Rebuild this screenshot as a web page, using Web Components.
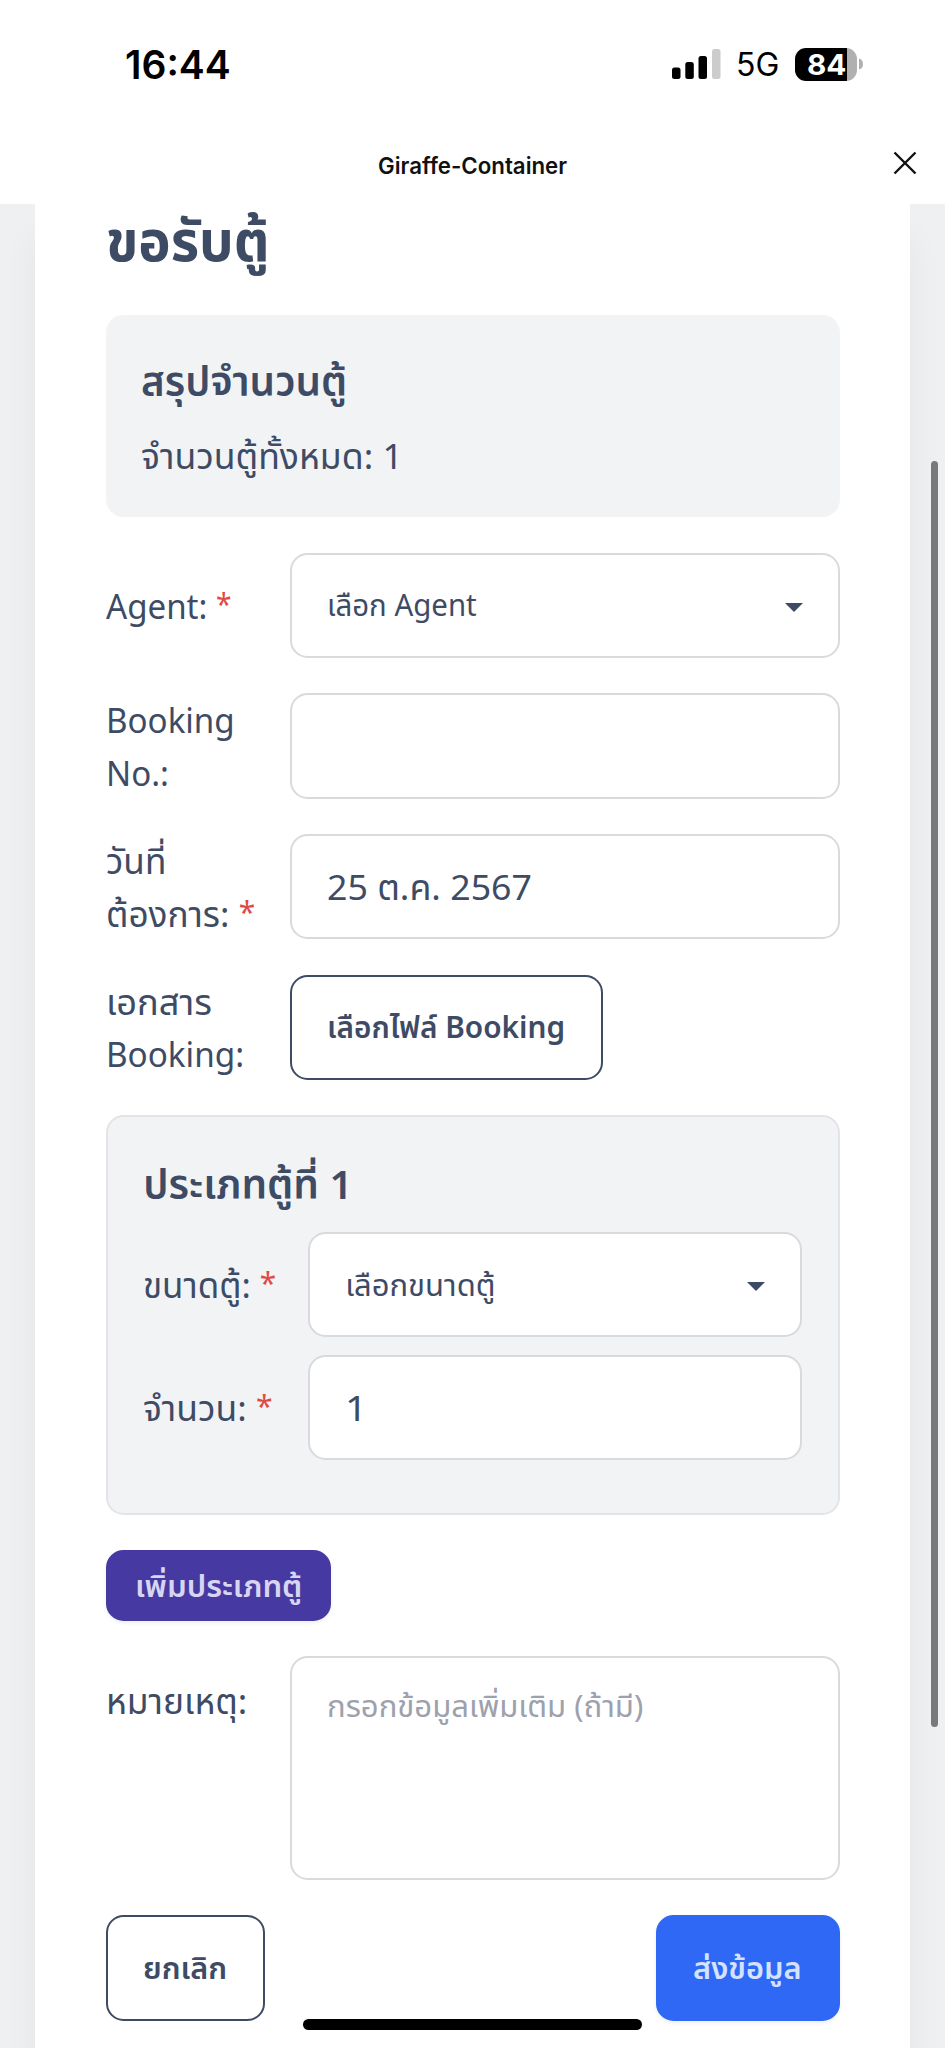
<!DOCTYPE html>
<html lang="th">
<head>
<meta charset="utf-8">
<title>Giraffe-Container</title>
<style>
html,body{margin:0;padding:0}
body{width:945px;height:2048px;overflow:hidden;background:#fff;font-family:"Noto Sans","Noto Sans Thai","IBM Plex Sans Thai",sans-serif;color:#3e4b65}
</style>
</head>
<body>
<giraffe-app></giraffe-app>
<script>
const define = (name, html, ready) => customElements.define(name, class extends HTMLElement {
  connectedCallback() {
    if (this.shadowRoot) return;
    const t = document.createElement('template');
    t.innerHTML = html;
    this.attachShadow({mode: 'open'}).append(t.content.cloneNode(true));
    if (ready) ready(this, this.shadowRoot);
  }
});

/* One line of text, condensed or widened to the measure given in "w". */
define('ui-text', `<style>
:host{display:block;white-space:nowrap;font-size:35.2px;line-height:52.8px}
:host([size=sm]){font-size:31px;line-height:44px;padding-bottom:2px}
:host([size=lg]){font-size:40.5px;line-height:61.6px;font-weight:600}
:host([size=xl]){font-size:56px;line-height:70px;font-weight:700}
:host([strong]){font-weight:600}
span{display:inline-block;transform-origin:0 50%}
::slotted(b){color:#df4a45;font-weight:400;font-size:30px;line-height:0;position:relative;top:-4px}
</style><span><slot></slot></span>`, (el, root) => {
  const w = +el.getAttribute('w'), s = root.querySelector('span');
  const natural = s.offsetWidth;
  el.style.width = w + 'px';
  if (w && natural) s.style.transform = `scaleX(${w / natural})`;
});

define('status-bar', `<style>
:host{display:flex;height:128px;box-sizing:border-box;padding:0 82px 0 125px;align-items:center;justify-content:space-between;color:#000;font-family:Inter,sans-serif}
ui-text.t{font-size:39px;font-weight:600;line-height:48px;padding-top:1px}
.r{display:flex;align-items:center}
.g{margin-left:15px;font-size:32px;line-height:40px;padding-top:2px}
.bat{width:62px;height:33px;border-radius:11px;margin-left:16px;background:linear-gradient(90deg,#000 52px,#b0b0b0 52px);color:#fff;display:flex;padding-left:12px;box-sizing:border-box}
.bat ui-text{font-size:29px;line-height:33px;font-weight:700}
svg{display:block}
</style>
<ui-text class="t" w="106">16:44</ui-text>
<div class="r">
<svg width="49" height="30" viewBox="0 0 49 30"><rect x="0" y="18.500" width="8.500" height="11.500" rx="2.500"/><rect x="13.300" y="13" width="8.500" height="17" rx="2.500"/><rect x="26.500" y="7" width="8.500" height="23" rx="2.500"/><rect x="40" width="8.500" height="30" rx="2.500" fill="#ccc"/></svg>
<ui-text class="g" w="43">5G</ui-text>
<div class="bat"><ui-text w="40">84</ui-text></div>
<svg width="6" height="12" viewBox="0 0 6 12"><path d="M2 .5Q6 1.500 6 6T2 11.500Z" fill="#b0b0b0"/></svg>
</div>`);

define('title-bar', `<style>
:host{display:grid;grid-template-columns:1fr 189px 1fr;height:76px;align-items:start;color:#111;font-family:Inter,sans-serif}
ui-text{grid-column:2;font-size:22.500px;line-height:30px;font-weight:600;padding-top:23px}
svg{justify-self:end;margin:23px 28px 0 0}
</style><ui-text w="189">Giraffe-Container</ui-text>
<svg width="24" height="24" viewBox="0 0 24 24" fill="none" stroke="#111" stroke-width="2.400"><path d="M1.500 1.500 22.500 22.500M22.500 1.500 1.500 22.500"/></svg>`);

define('form-row', `<style>
:host{display:grid;grid-template-columns:184px 1fr;align-items:center;min-height:105.400px}
:host([inner]){grid-template-columns:165px 1fr}
:host([top]){align-items:start}
:host([top]) .l{padding-top:17.600px}
</style><div class="l"><slot name="label"></slot></div><slot></slot>`);

define('ui-field', `<style>
:host{display:flex;align-items:center;justify-content:space-between;box-sizing:border-box;height:105.400px;background:#fff;border:2px solid #d9dadd;border-radius:17.600px;padding:0 35px}
:host([area]){height:224px;align-items:flex-start;padding-top:25px;color:#9da1ad}
svg{display:none}
:host([select]) svg{display:block;margin-top:4px}
</style><slot></slot><svg width="18" height="9" viewBox="0 0 18 9"><path d="M0 0H18L9 9Z" fill="#3c4a65"/></svg>`);

define('ui-button', `<style>
:host{display:flex;align-items:center;box-sizing:border-box;width:max-content;height:105.400px;border:2px solid #3e4b65;border-radius:17.600px;padding:0 36px 0 35px}
:host([kind=primary]){background:#2e68f5;border-color:#2e68f5;color:#d3e2ff;box-shadow:0 2px 4px #0001}
:host([kind=secondary]){background:#463aa2;border-color:#463aa2;color:#d8d5f2;height:70.400px;padding:0 27px;box-shadow:0 2px 4px #0001}
</style><slot></slot>`);

define('ui-panel', `<style>
:host{display:flex;flex-direction:column;gap:17.600px;box-sizing:border-box;background:#f2f3f5;border-radius:17.600px;padding:35.200px}
:host([outlined]){border:2px solid #e3e4e7;padding-bottom:53px}
</style><slot></slot>`);

define('giraffe-app', `<style>
:host{display:flex;flex-direction:column;height:2048px;position:relative}
main{flex:1;min-height:0;background:#eff0f2;padding:0 35px}
.card{height:1844px;box-sizing:border-box;background:#fff;padding:0 70.500px 0 71px;box-shadow:0 34px 34px #0000000d}
.title{margin-bottom:41px}
form{display:flex;flex-direction:column;gap:35.200px;margin:0}
.actions{display:flex;justify-content:space-between}
.thumb{position:absolute;left:931px;top:461px;width:7px;height:1266px;border-radius:4px;background:#77797b}
.home{position:absolute;left:303px;top:2019px;width:339px;height:11px;border-radius:6px;background:#000}
</style>
<status-bar></status-bar><title-bar></title-bar>
<main><div class="card">
<ui-text class="title" size="xl" w="164">ขอรับตู้</ui-text>
<form>
<ui-panel><ui-text size="lg" w="206">สรุปจำนวนตู้</ui-text><ui-text w="262">จำนวนตู้ทั้งหมด: 1</ui-text></ui-panel>
<form-row><ui-text slot="label" w="126">Agent: <b>*</b></ui-text><ui-field select><ui-text size="sm" w="150">เลือก Agent</ui-text></ui-field></form-row>
<form-row><div slot="label"><ui-text w="129">Booking</ui-text><ui-text w="63">No.:</ui-text></div><ui-field></ui-field></form-row>
<form-row><div slot="label"><ui-text w="60">วันที่</ui-text><ui-text w="149">ต้องการ: <b>*</b></ui-text></div><ui-field><ui-text w="205">25 ต.ค. 2567</ui-text></ui-field></form-row>
<form-row><div slot="label"><ui-text w="106">เอกสาร</ui-text><ui-text w="138">Booking:</ui-text></div><ui-button><ui-text size="sm" strong w="238">เลือกไฟล์ Booking</ui-text></ui-button></form-row>
<ui-panel outlined><ui-text size="lg" w="209">ประเภทตู้ที่ 1</ui-text>
<form-row inner><ui-text slot="label" w="133">ขนาดตู้: <b>*</b></ui-text><ui-field select><ui-text size="sm" w="150">เลือกขนาดตู้</ui-text></ui-field></form-row>
<form-row inner><ui-text slot="label" w="130">จำนวน: <b>*</b></ui-text><ui-field><ui-text w="22">1</ui-text></ui-field></form-row></ui-panel>
<ui-button kind="secondary"><ui-text size="sm" strong w="167">เพิ่มประเภทตู้</ui-text></ui-button>
<form-row top><ui-text slot="label" w="141">หมายเหตุ:</ui-text><ui-field area><ui-text size="sm" w="316">กรอกข้อมูลเพิ่มเติม (ถ้ามี)</ui-text></ui-field></form-row>
<div class="actions"><ui-button><ui-text size="sm" strong w="84">ยกเลิก</ui-text></ui-button><ui-button kind="primary"><ui-text size="sm" strong w="109">ส่งข้อมูล</ui-text></ui-button></div>
</form></div></main>
<div class="thumb"></div><div class="home"></div>`);
</script>
</body>
</html>
